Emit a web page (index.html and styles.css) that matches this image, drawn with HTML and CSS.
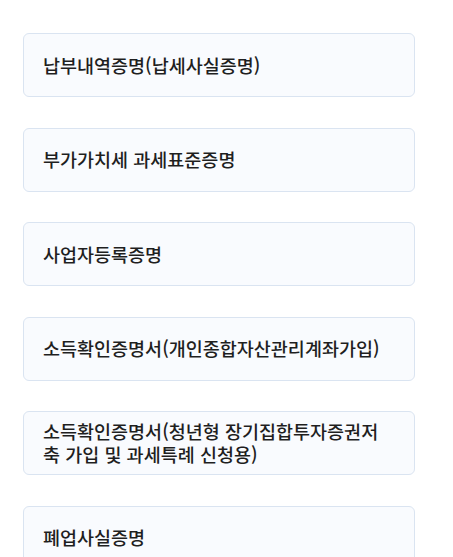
FILE: index.html
```html
<!DOCTYPE html>
<html lang="ko">
<head>
<meta charset="utf-8">
<link rel="stylesheet" href="styles.css">
</head>
<body>
<ul class="cert-list">
  <li class="cert-item"><span class="cert-name">납부내역증명(납세사실증명)</span></li>
  <li class="cert-item"><span class="cert-name">부가가치세 과세표준증명</span></li>
  <li class="cert-item"><span class="cert-name">사업자등록증명</span></li>
  <li class="cert-item"><span class="cert-name">소득확인증명서(개인종합자산관리계좌가입)</span></li>
  <li class="cert-item"><span class="cert-name">소득확인증명서(청년형 장기집합투자증권저축 가입 및 과세특례 신청용)</span></li>
  <li class="cert-item"><span class="cert-name">폐업사실증명</span></li>
</ul>
</body>
</html>
```
FILE: styles.css
```css
html, body {
  margin: 0;
  padding: 0;
  background: #ffffff;
}
body {
  font-family: "Noto Sans CJK KR", "Noto Sans", sans-serif;
  color: #1f1f1f;
}
.cert-list {
  list-style: none;
  margin: 0;
  padding: 33px 38px 0 23px;
  display: flex;
  flex-direction: column;
  gap: 30.5px;
}
.cert-item {
  box-sizing: border-box;
  min-height: 64px;
  display: flex;
  align-items: center;
  padding: 0 20px 0 19px;
  background: #f9fbfe;
  border: 1px solid #dae4f1;
  border-radius: 6px;
}
.cert-name {
  font-size: 18.5px;
  font-weight: 500;
  line-height: 23px;
  word-break: break-all;
}
```
